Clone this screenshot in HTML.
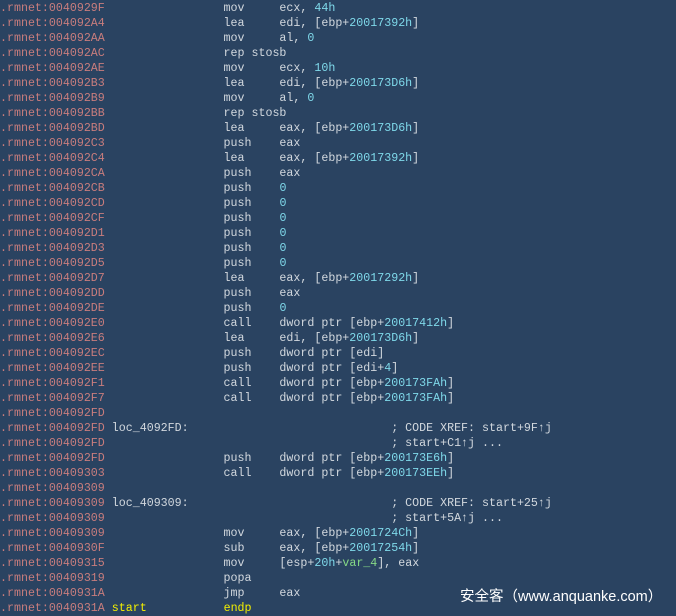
<!DOCTYPE html>
<html><head><meta charset="utf-8"><style>
html,body{margin:0;padding:0;background:#2a4361;width:676px;height:614px;overflow:hidden}
pre{margin:0;position:absolute;left:0;top:1px;font-family:"Liberation Mono",monospace;font-size:11.65px;line-height:15px;color:#d2d8de;white-space:pre}
.a{color:#c97d7d}.n{color:#7fd9ea}.g{color:#86d986}.y{color:#f4f000}
.wm{position:absolute;left:460px;top:585px;font-family:"Liberation Sans","Noto Sans CJK SC",sans-serif;font-size:14.5px;color:#fff}
</style></head><body><pre><span class="a">.rmnet:0040929F</span>                 mov     ecx, <span class="n">44h</span>
<span class="a">.rmnet:004092A4</span>                 lea     edi, [ebp+<span class="n">20017392h</span>]
<span class="a">.rmnet:004092AA</span>                 mov     al, <span class="n">0</span>
<span class="a">.rmnet:004092AC</span>                 rep stosb
<span class="a">.rmnet:004092AE</span>                 mov     ecx, <span class="n">10h</span>
<span class="a">.rmnet:004092B3</span>                 lea     edi, [ebp+<span class="n">200173D6h</span>]
<span class="a">.rmnet:004092B9</span>                 mov     al, <span class="n">0</span>
<span class="a">.rmnet:004092BB</span>                 rep stosb
<span class="a">.rmnet:004092BD</span>                 lea     eax, [ebp+<span class="n">200173D6h</span>]
<span class="a">.rmnet:004092C3</span>                 push    eax
<span class="a">.rmnet:004092C4</span>                 lea     eax, [ebp+<span class="n">20017392h</span>]
<span class="a">.rmnet:004092CA</span>                 push    eax
<span class="a">.rmnet:004092CB</span>                 push    <span class="n">0</span>
<span class="a">.rmnet:004092CD</span>                 push    <span class="n">0</span>
<span class="a">.rmnet:004092CF</span>                 push    <span class="n">0</span>
<span class="a">.rmnet:004092D1</span>                 push    <span class="n">0</span>
<span class="a">.rmnet:004092D3</span>                 push    <span class="n">0</span>
<span class="a">.rmnet:004092D5</span>                 push    <span class="n">0</span>
<span class="a">.rmnet:004092D7</span>                 lea     eax, [ebp+<span class="n">20017292h</span>]
<span class="a">.rmnet:004092DD</span>                 push    eax
<span class="a">.rmnet:004092DE</span>                 push    <span class="n">0</span>
<span class="a">.rmnet:004092E0</span>                 call    dword ptr [ebp+<span class="n">20017412h</span>]
<span class="a">.rmnet:004092E6</span>                 lea     edi, [ebp+<span class="n">200173D6h</span>]
<span class="a">.rmnet:004092EC</span>                 push    dword ptr [edi]
<span class="a">.rmnet:004092EE</span>                 push    dword ptr [edi+<span class="n">4</span>]
<span class="a">.rmnet:004092F1</span>                 call    dword ptr [ebp+<span class="n">200173FAh</span>]
<span class="a">.rmnet:004092F7</span>                 call    dword ptr [ebp+<span class="n">200173FAh</span>]
<span class="a">.rmnet:004092FD</span>
<span class="a">.rmnet:004092FD</span> loc_4092FD:                             ; CODE XREF: start+9F↑j
<span class="a">.rmnet:004092FD</span>                                         ; start+C1↑j ...
<span class="a">.rmnet:004092FD</span>                 push    dword ptr [ebp+<span class="n">200173E6h</span>]
<span class="a">.rmnet:00409303</span>                 call    dword ptr [ebp+<span class="n">200173EEh</span>]
<span class="a">.rmnet:00409309</span>
<span class="a">.rmnet:00409309</span> loc_409309:                             ; CODE XREF: start+25↑j
<span class="a">.rmnet:00409309</span>                                         ; start+5A↑j ...
<span class="a">.rmnet:00409309</span>                 mov     eax, [ebp+<span class="n">2001724Ch</span>]
<span class="a">.rmnet:0040930F</span>                 sub     eax, [ebp+<span class="n">20017254h</span>]
<span class="a">.rmnet:00409315</span>                 mov     [esp+<span class="n">20h</span>+<span class="g">var_4</span>], eax
<span class="a">.rmnet:00409319</span>                 popa
<span class="a">.rmnet:0040931A</span>                 jmp     eax
<span class="a">.rmnet:0040931A</span> <span class="y">start</span>           <span class="y">endp</span></pre>
<div class="wm">安全客（www.anquanke.com）</div>
</body></html>
